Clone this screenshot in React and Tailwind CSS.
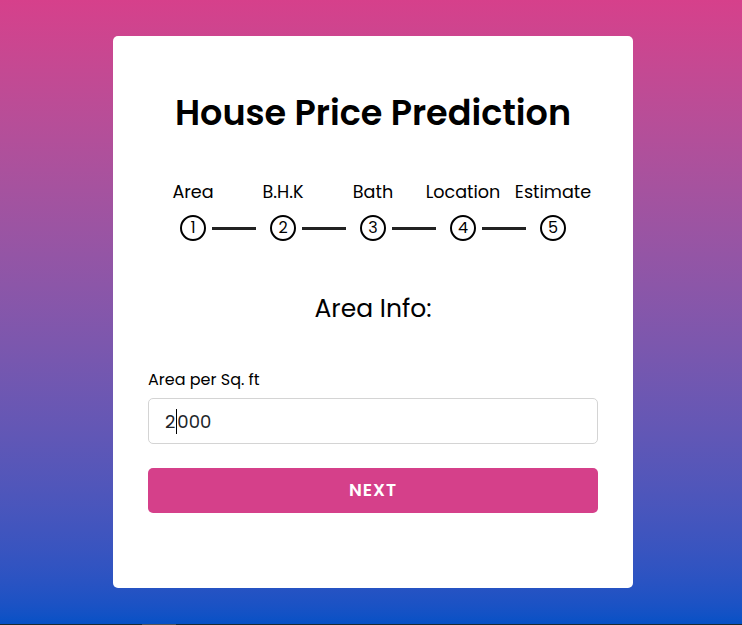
import React from "react";

const steps = ["Area", "B.H.K", "Bath", "Location", "Estimate"];

const Stepper = () => {
  return (
    <div className="w-[450px]">
      <div className="grid grid-cols-5 text-[17.6px] leading-6 text-black">
        {steps.map((s) => (
          <div key={s} className="text-center">{s}</div>
        ))}
      </div>
      <div className="mt-[11px] flex items-center pl-[32px]">
        {steps.map((s, i) => (
          <React.Fragment key={s}>
            <div className="flex h-[26px] w-[26px] items-center justify-center rounded-full border-2 border-black text-[16px] leading-none text-black">
              {i + 1}
            </div>
            {i < steps.length - 1 && (
              <div className="ml-[6px] mr-[14px] h-[3px] w-[44px] bg-[#222]" />
            )}
          </React.Fragment>
        ))}
      </div>
    </div>
  );
};

export default function App() {
  return (
    <div className="font-['Poppins','Inter',sans-serif]">
      <div className="flex h-[624px] w-full justify-center bg-gradient-to-b from-[#d6408b] to-[#0551c6] pl-[4px] pt-[36px]">
        <div className="flex h-[552px] w-[520px] flex-col items-center rounded-[5px] bg-white px-[35px] pt-[56px]">
          <h1 className="text-[35px] font-semibold leading-[42px] text-black">House Price Prediction</h1>

          <div className="mt-[46px]">
            <Stepper />
          </div>

          <h2 className="mt-[53px] text-[25px] font-normal leading-[30px] text-black">Area Info:</h2>

          <div className="mt-[45px] w-full">
            <label className="block text-[16px] leading-[22px] text-black">Area per Sq. ft</label>
            <div className="mt-[7px] flex h-[46px] w-full items-center rounded-[5px] border border-[#d4d4d4] pl-[16px] text-[18px] text-[#212529]">
              2<span className="mx-[0.5px] inline-block h-[25px] w-px bg-black" />000
            </div>
            <button className="mt-[24px] flex h-[45px] w-full items-center justify-center rounded-[5px] bg-[#d5408a] text-[17.5px] font-semibold tracking-wider text-white">
              NEXT
            </button>
          </div>
        </div>
      </div>
      <div className="flex h-px w-full bg-[#1b2a30]">
        <div className="ml-[142px] h-px w-[34px] bg-[#555]" />
      </div>
    </div>
  );
}
